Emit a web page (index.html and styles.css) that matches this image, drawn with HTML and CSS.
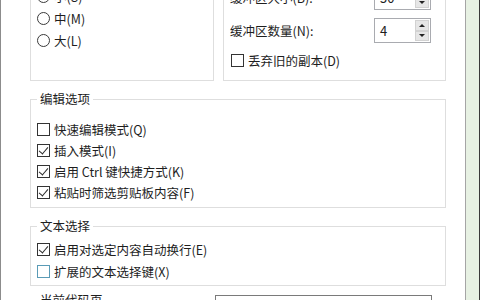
FILE: index.html
```html
<!DOCTYPE html>
<html lang="zh-CN">
<head>
  <meta charset="UTF-8">
  <title>属性</title>
  <link rel="stylesheet" href="styles.css">
</head>
<body>
  <div class="window">
    <div class="page">

      <!-- 光标大小 / 命令记录 -->
      <div class="top-row">
        <div class="box box-cursor">
          <div class="opt-row"><span class="radio on"></span>小(S)</div>
          <div class="opt-row"><span class="radio"></span>中(M)</div>
          <div class="opt-row"><span class="radio"></span>大(L)</div>
        </div>
        <div class="box box-history">
          <div class="field-row">
            <span>缓冲区大小(B):</span>
            <div class="spin">
              <span class="spin-val">50</span>
              <span class="spin-btns"><i class="up"></i><i class="down"></i></span>
            </div>
          </div>
          <div class="field-row">
            <span>缓冲区数量(N):</span>
            <div class="spin">
              <span class="spin-val">4</span>
              <span class="spin-btns"><i class="up"></i><i class="down"></i></span>
            </div>
          </div>
          <div class="opt-row discard"><span class="check"></span>丢弃旧的副本(D)</div>
        </div>
      </div>

      <!-- 编辑选项 -->
      <fieldset class="group group-edit">
        <legend>编辑选项</legend>
        <div class="opt-row"><span class="check"></span>快速编辑模式(Q)</div>
        <div class="opt-row"><span class="check on"></span>插入模式(I)</div>
        <div class="opt-row"><span class="check on"></span>启用 Ctrl 键快捷方式(K)</div>
        <div class="opt-row"><span class="check on"></span>粘贴时筛选剪贴板内容(F)</div>
      </fieldset>

      <!-- 文本选择 -->
      <fieldset class="group group-select">
        <legend>文本选择</legend>
        <div class="opt-row"><span class="check on"></span>启用对选定内容自动换行(E)</div>
        <div class="opt-row"><span class="check focus"></span>扩展的文本选择键(X)</div>
      </fieldset>

      <!-- 当前代码页 -->
      <div class="group-code">
        <span class="code-title">当前代码页</span>
        <div class="code-box">936 (ANSI/OEM - 简体中文 GBK)</div>
      </div>

    </div>
    <div class="side"></div>
  </div>
</body>
</html>
```

FILE: styles.css
```css
* {
  box-sizing: border-box;
}
body {
  margin: 0;
  width: 480px;
  height: 300px;
  overflow: hidden;
  background: #fff;
  font-family: "Noto Sans CJK SC", "DejaVu Sans", sans-serif;
  font-size: 12.5px;
  color: #1e1e1e;
}
.window {
  display: flex;
  height: 300px;
}
.page {
  width: 466px;
  height: 300px;
  overflow: hidden;
  display: flex;
  flex-direction: column;
  padding-left: 29px;
  border-left: 1px solid #8c8c8c;
  border-right: 1px solid #a5a5a5;
}
.side {
  width: 14px;
  background: #e7f1e3;
  border-right: 1px solid #3a3a3a;
}

/* top boxes */
.top-row {
  display: flex;
  gap: 9px;
  margin-top: -24px;
  width: 416px;
}
.box {
  height: 105px;
  border: 1px solid #dedede;
  border-top: none;
  padding: 9px 6px 0 6px;
}
.box-cursor {
  width: 184px;
}
.box-cursor .opt-row {
  height: 22px;
}
.box-history {
  width: 223px;
}
.field-row {
  display: flex;
  align-items: center;
  height: 25px;
  margin-bottom: 8px;
}
.field-row .spin {
  margin-left: auto;
  margin-right: 8px;
}
.discard {
  height: 18px;
  margin-top: 7px;
  padding-left: 1px;
}

/* spin box */
.spin {
  display: flex;
  width: 57px;
  height: 25px;
  border: 1px solid #a9abb0;
  background: #fff;
}
.spin-val {
  flex: 1;
  padding-left: 5px;
  line-height: 23px;
  font-size: 13px;
}
.spin-btns {
  display: flex;
  flex-direction: column;
  width: 15px;
  padding: 1px 1px 1px 0;
}
.spin-btns i {
  flex: 1;
  display: flex;
  align-items: center;
  justify-content: center;
  background: #e6e6e6;
  border: 1px solid #d2d2d2;
}
.spin-btns i::after {
  content: "";
  border-left: 3px solid transparent;
  border-right: 3px solid transparent;
}
.spin-btns .up::after {
  border-bottom: 3px solid #222;
}
.spin-btns .down::after {
  border-top: 3px solid #222;
}

/* option rows */
.opt-row {
  display: flex;
  align-items: center;
  gap: 4px;
  white-space: nowrap;
}
.radio {
  width: 13px;
  height: 13px;
  border: 1px solid #3a3a3a;
  border-radius: 50%;
  display: flex;
  align-items: center;
  justify-content: center;
}
.radio.on::after {
  content: "";
  width: 5px;
  height: 5px;
  border-radius: 50%;
  background: #222;
}
.check {
  position: relative;
  width: 13px;
  height: 13px;
  border: 1px solid #333;
  background: #fff;
}
.check.focus {
  border-color: #5a9bb6;
}
.check.on::after {
  content: "";
  position: absolute;
  left: 3px;
  top: 0;
  width: 4px;
  height: 8px;
  border-right: 1.4px solid #2a2a2a;
  border-bottom: 1.4px solid #2a2a2a;
  transform: rotate(40deg);
}

/* group boxes */
.group {
  width: 416px;
  margin: 0;
  border: 1px solid #dedede;
  padding: 0 6px;
  min-width: 0;
}
.group legend {
  padding: 0 3px;
  line-height: 16px;
}
.group-edit {
  margin-top: 10px;
  padding-top: 12px;
  padding-bottom: 4px;
}
.group-edit .opt-row {
  height: 21px;
}
.group-select {
  margin-top: 10px;
  padding-top: 4px;
  padding-bottom: 3px;
}
.group-select .opt-row {
  height: 22px;
}

/* code page */
.group-code {
  display: flex;
  align-items: flex-start;
  margin-top: 6px;
  width: 416px;
}
.code-title {
  width: 185px;
  padding-left: 10px;
  line-height: 16px;
}
.code-box {
  margin-top: 3px;
  width: 217px;
  height: 20px;
  border: 1px solid #7a7a7a;
  padding: 2px 4px;
  font-size: 11px;
  color: #555;
}
```
